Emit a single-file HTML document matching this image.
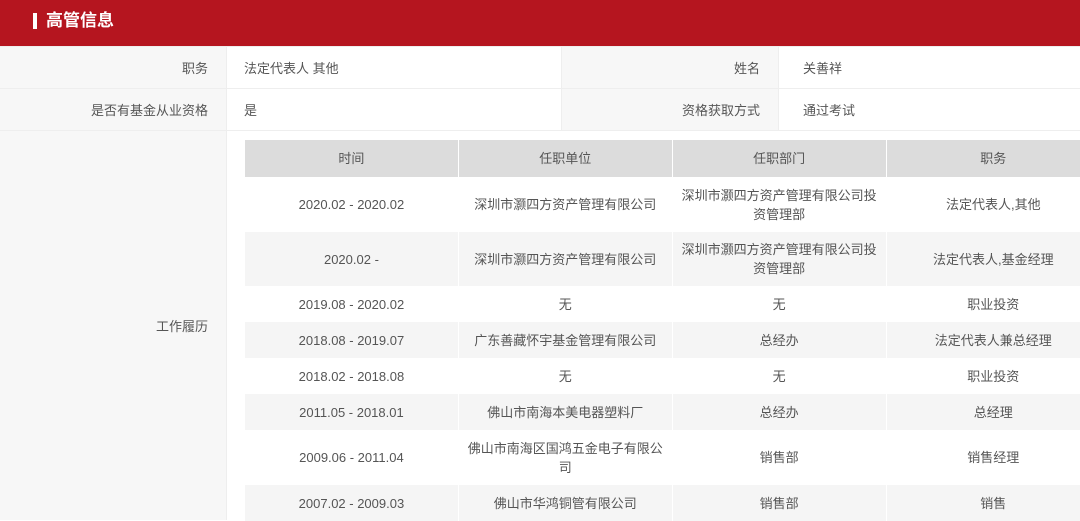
<!DOCTYPE html><html><head><meta charset="utf-8"><style>
body{margin:0;width:1080px;height:520px;overflow:hidden;background:#fff;font-family:"Liberation Sans","Noto Sans CJK SC",sans-serif;font-size:13px;color:#555}
.hd{position:absolute;left:0;top:0;width:1080px;height:46px;background:#b5151f;color:#fff;font-weight:bold;font-size:17px}
.hd span{position:absolute;left:46px;top:10px;line-height:22px}
.hd i{position:absolute;left:33px;top:13px;width:4px;height:16px;background:#fff}
.c{position:absolute;box-sizing:border-box;display:flex;align-items:center}
.l{background:#f7f7f7;justify-content:flex-end;padding-right:18px}
.bd{background:#eee}
table{position:absolute;left:244px;top:140px;width:856px;border-collapse:collapse;table-layout:fixed}
td,th{text-align:center;font-weight:normal;padding:0 6px;line-height:19px;border-left:1px solid #fff}
th{background:#dcdcdc;height:37px}
tr:nth-child(odd) td{background:#f5f5f5}
</style></head><body>
<div class="hd"><i></i><span>高管信息</span></div>
<div class="c bd" style="left:0;top:46px;width:1080px;height:474px"></div>
<div class="c l" style="left:0;top:47px;width:226px;height:41px">职务</div>
<div class="c" style="left:227px;top:47px;width:334px;height:41px;background:#fff;padding-left:17px">法定代表人 其他</div>
<div class="c l" style="left:562px;top:47px;width:216px;height:41px">姓名</div>
<div class="c" style="left:779px;top:47px;width:301px;height:41px;background:#fff;padding-left:24px">关善祥</div>
<div class="c l" style="left:0;top:89px;width:226px;height:41px">是否有基金从业资格</div>
<div class="c" style="left:227px;top:89px;width:334px;height:41px;background:#fff;padding-left:17px">是</div>
<div class="c l" style="left:562px;top:89px;width:216px;height:41px">资格获取方式</div>
<div class="c" style="left:779px;top:89px;width:301px;height:41px;background:#fff;padding-left:24px">通过考试</div>
<div class="c l" style="left:0;top:131px;width:226px;height:389px">工作履历</div>
<div class="c" style="left:227px;top:131px;width:853px;height:389px;background:#fff"></div>
<table>
<tr><th>时间</th><th>任职单位</th><th>任职部门</th><th>职务</th></tr>
<tr style="height:55px"><td>2020.02 - 2020.02</td><td>深圳市灏四方资产管理有限公司</td><td>深圳市灏四方资产管理有限公司投资管理部</td><td>法定代表人,其他</td></tr>
<tr style="height:54px"><td>2020.02 -</td><td>深圳市灏四方资产管理有限公司</td><td>深圳市灏四方资产管理有限公司投资管理部</td><td>法定代表人,基金经理</td></tr>
<tr style="height:36px"><td>2019.08 - 2020.02</td><td>无</td><td>无</td><td>职业投资</td></tr>
<tr style="height:36px"><td>2018.08 - 2019.07</td><td>广东善藏怀宇基金管理有限公司</td><td>总经办</td><td>法定代表人兼总经理</td></tr>
<tr style="height:36px"><td>2018.02 - 2018.08</td><td>无</td><td>无</td><td>职业投资</td></tr>
<tr style="height:36px"><td>2011.05 - 2018.01</td><td>佛山市南海本美电器塑料厂</td><td>总经办</td><td>总经理</td></tr>
<tr style="height:55px"><td>2009.06 - 2011.04</td><td>佛山市南海区国鸿五金电子有限公司</td><td>销售部</td><td>销售经理</td></tr>
<tr style="height:36px"><td>2007.02 - 2009.03</td><td>佛山市华鸿铜管有限公司</td><td>销售部</td><td>销售</td></tr>
</table>
</body></html>
